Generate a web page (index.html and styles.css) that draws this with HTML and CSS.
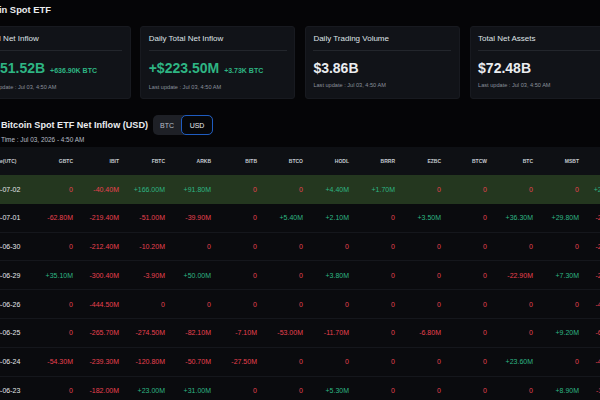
FILE: index.html
```html
<!DOCTYPE html>
<html lang="en">
<head>
<meta charset="utf-8">
<title>Bitcoin Spot ETF</title>
<link rel="stylesheet" href="styles.css">
</head>
<body>
<div class="page">
  <h1 class="page-title">Bitcoin Spot ETF</h1>

  <div class="cards">
    <div class="card">
      <div class="card-label">Total Net Inflow</div>
      <div class="card-value"><span class="big up">+$51.52B</span><span class="sub up">+636.90K BTC</span></div>
      <div class="card-update">Last update : Jul 03, 4:50 AM</div>
    </div>
    <div class="card">
      <div class="card-label">Daily Total Net Inflow</div>
      <div class="card-value"><span class="big up">+$223.50M</span><span class="sub up">+3.73K BTC</span></div>
      <div class="card-update">Last update : Jul 03, 4:50 AM</div>
    </div>
    <div class="card">
      <div class="card-label">Daily Trading Volume</div>
      <div class="card-value"><span class="big">$3.86B</span></div>
      <div class="card-update">Last update : Jul 03, 4:50 AM</div>
    </div>
    <div class="card">
      <div class="card-label">Total Net Assets</div>
      <div class="card-value"><span class="big">$72.48B</span></div>
      <div class="card-update">Last update : Jul 03, 4:50 AM</div>
    </div>
  </div>

  <section class="flow">
    <div class="flow-head">
      <h2 class="flow-title">Bitcoin Spot ETF Net Inflow (USD)</h2>
      <div class="toggle">
        <span class="opt">BTC</span>
        <span class="opt active">USD</span>
      </div>
    </div>
    <div class="time">Time : Jul 03, 2026 - 4:50 AM</div>
  </section>

  <div class="table">
    <div class="row head">
      <span class="c date">Date(UTC)</span>
      <span class="c">GBTC</span><span class="c">IBIT</span><span class="c">FBTC</span><span class="c">ARKB</span>
      <span class="c">BITB</span><span class="c">BTCO</span><span class="c">HODL</span><span class="c">BRRR</span>
      <span class="c">EZBC</span><span class="c">BTCW</span><span class="c">BTC</span><span class="c">MSBT</span><span class="c">Total</span>
    </div>
    <div class="row hl">
      <span class="c date">2026-07-02</span>
      <span class="c dn">0</span><span class="c dn">-40.40M</span><span class="c up">+166.00M</span><span class="c up">+91.80M</span>
      <span class="c dn">0</span><span class="c dn">0</span><span class="c up">+4.40M</span><span class="c up">+1.70M</span>
      <span class="c dn">0</span><span class="c dn">0</span><span class="c dn">0</span><span class="c dn">0</span><span class="c up">+223.50M</span>
    </div>
    <div class="row">
      <span class="c date">2026-07-01</span>
      <span class="c dn">-62.80M</span><span class="c dn">-219.40M</span><span class="c dn">-51.00M</span><span class="c dn">-39.90M</span>
      <span class="c dn">0</span><span class="c up">+5.40M</span><span class="c up">+2.10M</span><span class="c dn">0</span>
      <span class="c up">+3.50M</span><span class="c dn">0</span><span class="c up">+36.30M</span><span class="c up">+29.80M</span><span class="c dn">-296.00M</span>
    </div>
    <div class="row">
      <span class="c date">2026-06-30</span>
      <span class="c dn">0</span><span class="c dn">-212.40M</span><span class="c dn">-10.20M</span><span class="c dn">0</span>
      <span class="c dn">0</span><span class="c dn">0</span><span class="c dn">0</span><span class="c dn">0</span>
      <span class="c dn">0</span><span class="c dn">0</span><span class="c dn">0</span><span class="c dn">0</span><span class="c dn">-222.60M</span>
    </div>
    <div class="row">
      <span class="c date">2026-06-29</span>
      <span class="c up">+35.10M</span><span class="c dn">-300.40M</span><span class="c dn">-3.90M</span><span class="c up">+50.00M</span>
      <span class="c dn">0</span><span class="c dn">0</span><span class="c up">+3.80M</span><span class="c dn">0</span>
      <span class="c dn">0</span><span class="c dn">0</span><span class="c dn">-22.90M</span><span class="c up">+7.30M</span><span class="c dn">-231.00M</span>
    </div>
    <div class="row">
      <span class="c date">2026-06-26</span>
      <span class="c dn">0</span><span class="c dn">-444.50M</span><span class="c dn">0</span><span class="c dn">0</span>
      <span class="c dn">0</span><span class="c dn">0</span><span class="c dn">0</span><span class="c dn">0</span>
      <span class="c dn">0</span><span class="c dn">0</span><span class="c dn">0</span><span class="c dn">0</span><span class="c dn">-444.50M</span>
    </div>
    <div class="row">
      <span class="c date">2026-06-25</span>
      <span class="c dn">0</span><span class="c dn">-265.70M</span><span class="c dn">-274.50M</span><span class="c dn">-82.10M</span>
      <span class="c dn">-7.10M</span><span class="c dn">-53.00M</span><span class="c dn">-11.70M</span><span class="c dn">0</span>
      <span class="c dn">-6.80M</span><span class="c dn">0</span><span class="c dn">0</span><span class="c up">+9.20M</span><span class="c dn">-691.70M</span>
    </div>
    <div class="row">
      <span class="c date">2026-06-24</span>
      <span class="c dn">-54.30M</span><span class="c dn">-239.30M</span><span class="c dn">-120.80M</span><span class="c dn">-50.70M</span>
      <span class="c dn">-27.50M</span><span class="c dn">0</span><span class="c dn">0</span><span class="c dn">0</span>
      <span class="c dn">0</span><span class="c dn">0</span><span class="c up">+23.60M</span><span class="c dn">0</span><span class="c dn">-469.00M</span>
    </div>
    <div class="row">
      <span class="c date">2026-06-23</span>
      <span class="c dn">0</span><span class="c dn">-182.00M</span><span class="c up">+23.00M</span><span class="c up">+31.00M</span>
      <span class="c dn">0</span><span class="c dn">0</span><span class="c up">+5.30M</span><span class="c dn">0</span>
      <span class="c dn">0</span><span class="c dn">0</span><span class="c dn">0</span><span class="c up">+8.90M</span><span class="c dn">-113.80M</span>
    </div>
  </div>
</div>
</body>
</html>
```

FILE: styles.css
```css
html, body {
  margin: 0;
  padding: 0;
  background: #050507;
  overflow: hidden;
  width: 600px;
  height: 400px;
}

body {
  font-family: "Liberation Sans", Arial, sans-serif;
  color: #eaecef;
}

.page {
  margin-left: -24.5px;
  width: 700px;
  padding-top: 4px;
}

.page-title {
  margin: 0;
  padding-left: 0;
  font-size: 9.4px;
  line-height: 12px;
  font-weight: 700;
  color: #eaecef;
}

.cards {
  display: flex;
  gap: 9.7px;
  margin-top: 10px;
}

.card {
  flex: 0 0 155px;
  box-sizing: border-box;
  background: #111318;
  border: 1px solid #181a20;
  border-radius: 3px;
  padding: 7px 7.5px 7.5px;
}

.card-label {
  font-size: 8px;
  line-height: 10px;
  color: #dfe2e6;
  padding-bottom: 6px;
  border-bottom: 1px solid #23262c;
}

.card-value {
  margin-top: 9px;
  display: flex;
  align-items: baseline;
  gap: 5px;
  line-height: 17px;
  white-space: nowrap;
}

.big {
  font-size: 14px;
  font-weight: 700;
  color: #eaecef;
}

.sub {
  font-size: 7px;
  font-weight: 700;
}

.card-update {
  margin-top: 4.5px;
  font-size: 5.6px;
  line-height: 7px;
  color: #8a919c;
  white-space: nowrap;
}

.up { color: #2eb583; }
.big.up { color: #2eb583; }
.dn { color: #e8414f; }

.flow {
  padding-left: 25.5px;
  margin-top: 16px;
}

.flow-head {
  display: flex;
  align-items: center;
  gap: 5px;
  height: 20px;
}

.flow-title {
  margin: 0;
  font-size: 9.1px;
  line-height: 12px;
  font-weight: 700;
  color: #eaecef;
}

.toggle {
  display: flex;
  width: 60px;
  height: 20px;
  background: #1e2026;
  border-radius: 5px;
}

.opt {
  display: flex;
  align-items: center;
  justify-content: center;
  font-size: 7px;
  color: #b7bdc6;
  width: 28px;
}

.opt.active {
  width: 32px;
  box-sizing: border-box;
  border: 1.5px solid #1f5cc0;
  border-radius: 5px;
  background: #060709;
  color: #eaecef;
}

.time {
  margin-top: 1px;
  font-size: 6.4px;
  line-height: 8px;
  color: #b7bdc6;
}

.table {
  margin-top: 3px;
  background: #0a0b0e;
}

.row {
  display: grid;
  grid-template-columns: 42.5px repeat(12, 46px) 46px;
  align-items: center;
  box-sizing: border-box;
  height: 28.8px;
  padding-left: 9px;
  border-bottom: 1px solid #15171c;
  white-space: nowrap;
}

.row.head {
  height: 28px;
  background: #0e1014;
  border-bottom: none;
}

.row.hl {
  background: #24371f;
  border-bottom: none;
}

.c {
  text-align: right;
  font-size: 7px;
}

.c.date {
  text-align: left;
  color: #e3e6ea;
}

.head .c {
  font-size: 5px;
  font-weight: 700;
  color: #c4c9d0;
}

.head .c.date {
  padding-left: 7.5px;
}
```
